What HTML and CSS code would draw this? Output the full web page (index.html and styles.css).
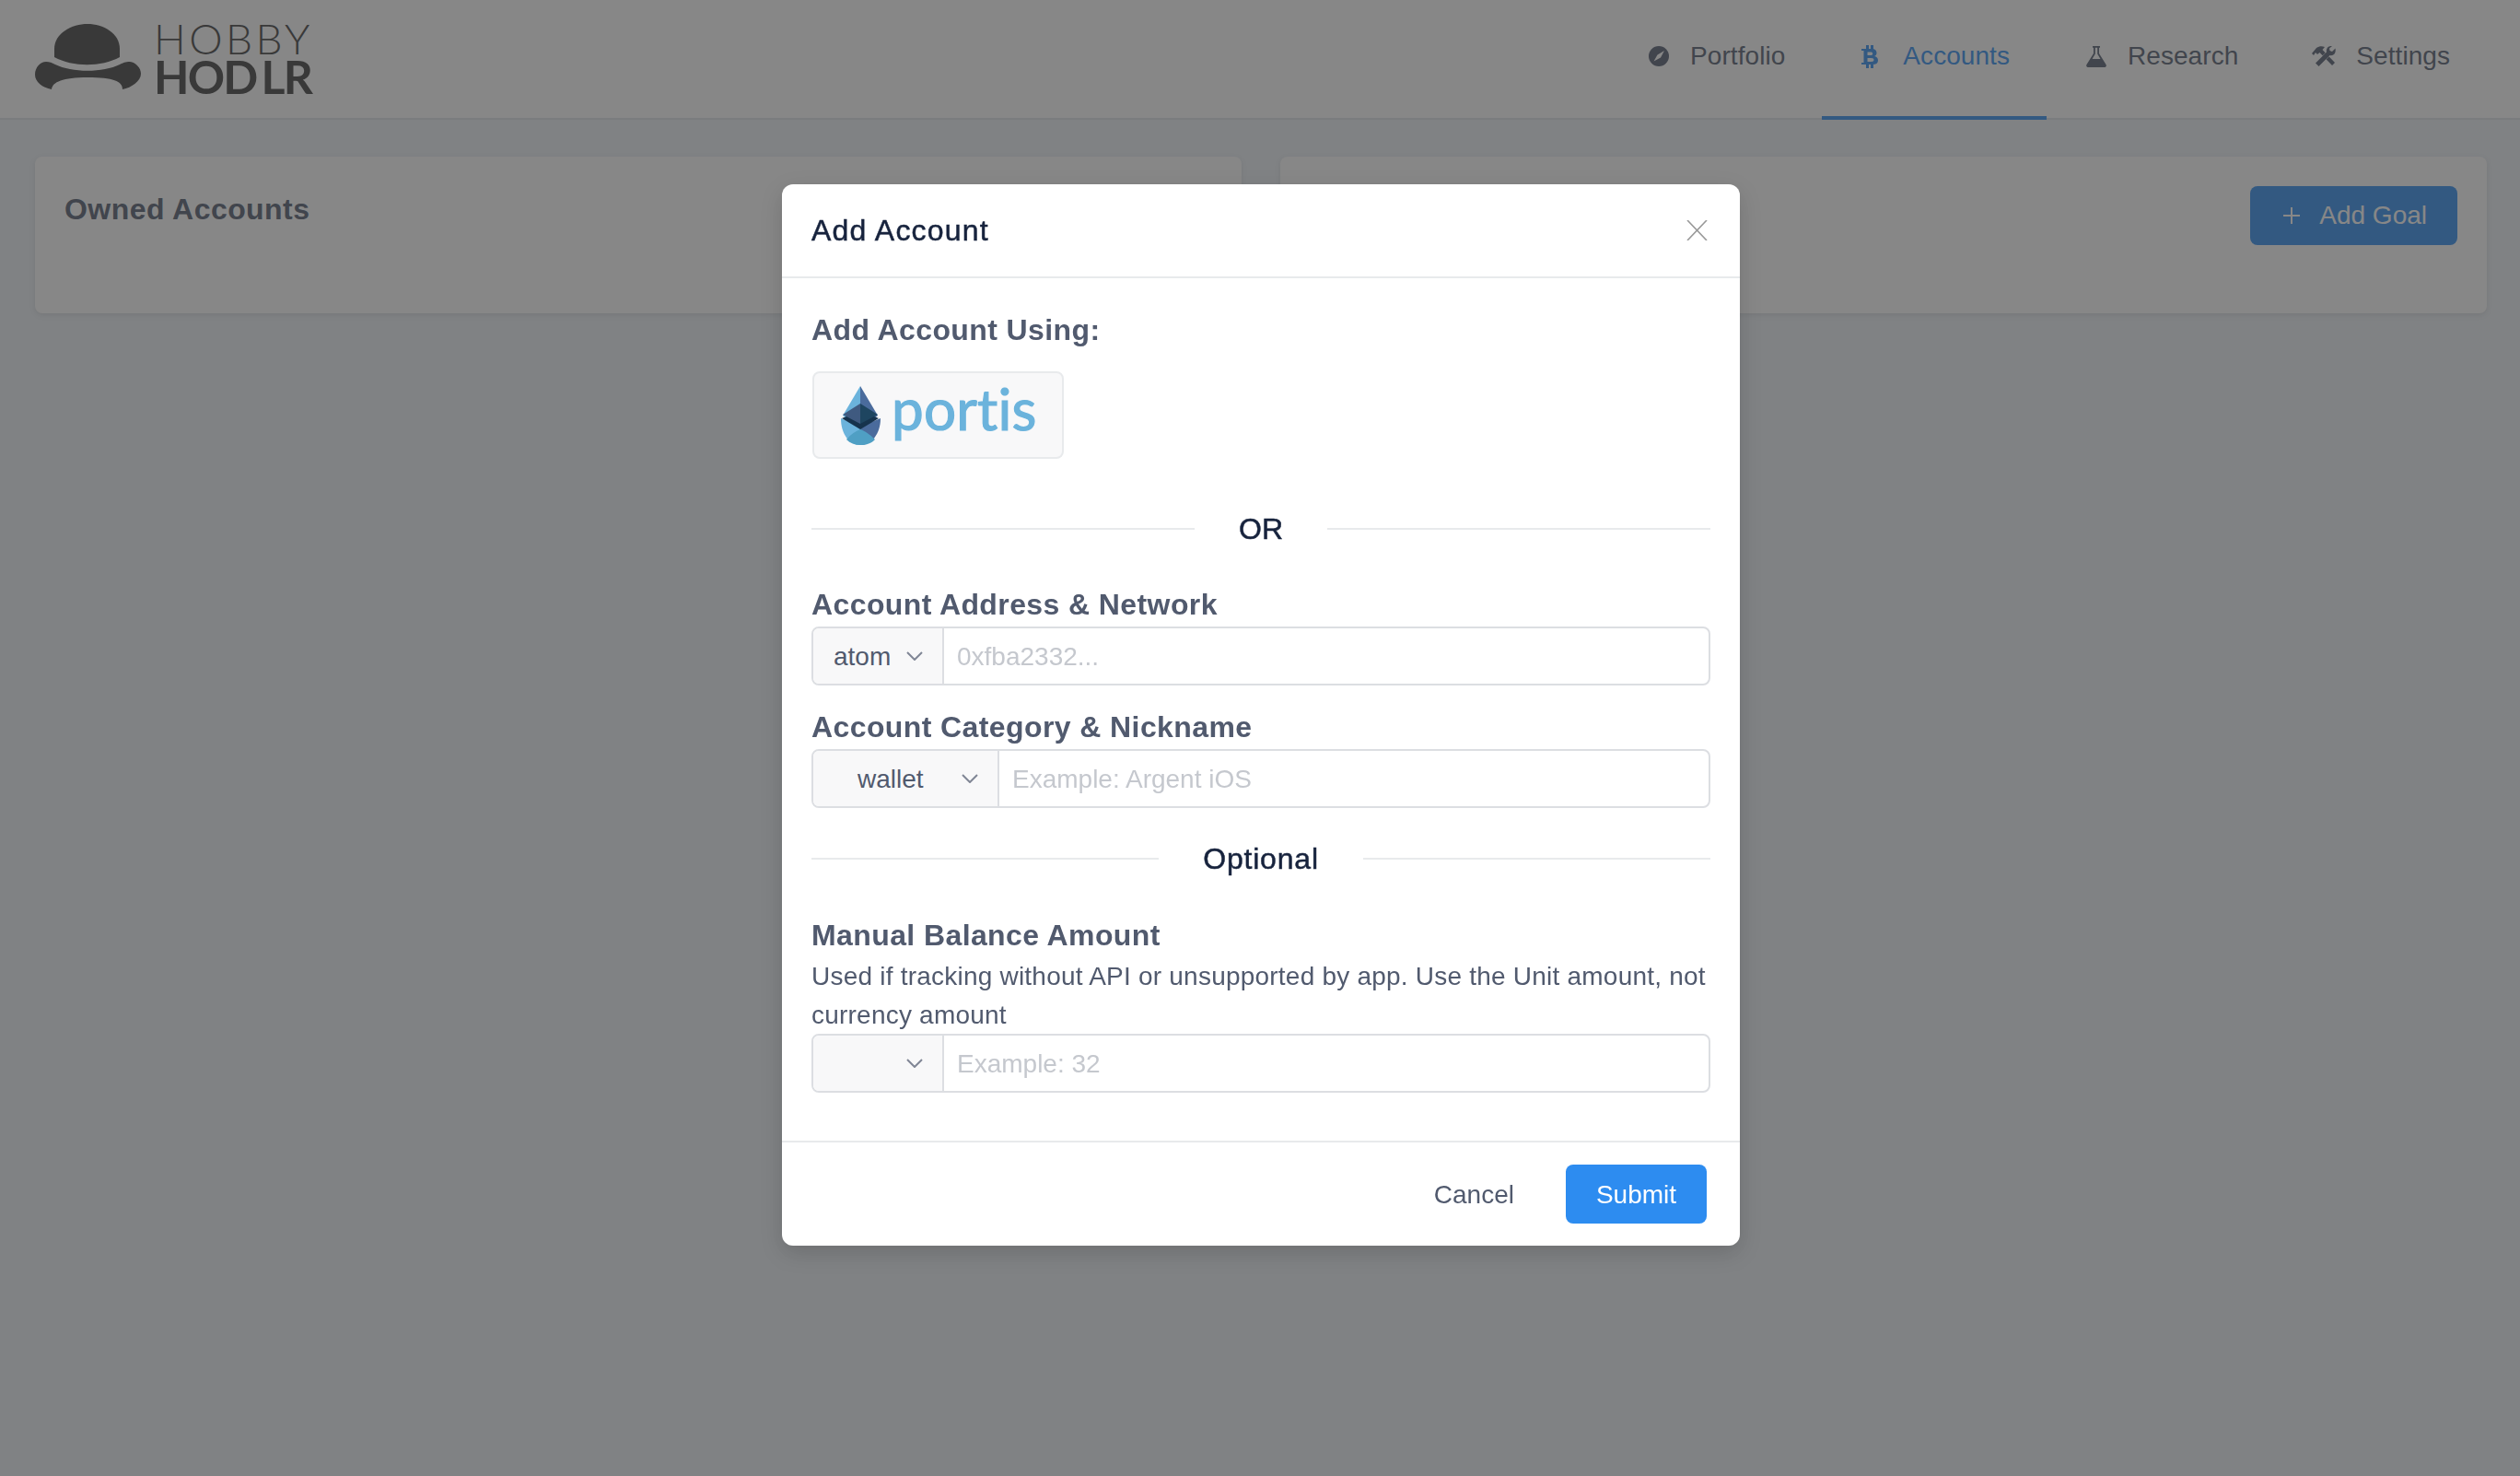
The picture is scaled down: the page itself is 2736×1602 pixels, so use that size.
FILE: index.html
```html
<!DOCTYPE html>
<html lang="en">
<head>
  <meta charset="UTF-8">
  <meta name="viewport" content="width=device-width, initial-scale=1.0">
  <title>Hobby Hodlr</title>
  <link rel="stylesheet" href="styles.css">
</head>
<body>
  <header class="topbar">
    <div class="logo">
      <svg class="logo-hat" width="115" height="71" viewBox="0 0 115 71">
        <path d="M21 36V27C21 10 40 0 57 0C74 0 92 10 92 27V36C72 47 41 47 21 36Z"/>
        <path d="M12 41C16 41 18 42 22 44C40 53 74 53 92 44C96 42 98 41 103 41C110 42 115 48 115 54C115 62 105 69 95 71C95 62 85 58 57 58C30 58 19 63 18 71C8 69 0 63 0 55C0 47 6 41 12 41Z"/>
      </svg>
      <div class="logo-text">
        <div class="logo-top">HOBBY</div>
        <div class="logo-bottom">HOD<span class="logo-gap">LR</span></div>
      </div>
    </div>
    <nav class="nav">
      <a class="nav-item">
        <span class="nav-icon">
          <svg width="22" height="22" viewBox="0 0 22 22"><circle cx="11" cy="11" r="11" fill="currentColor"/><path d="M17 5L13 12.5L5.5 16.5L9.5 9.5Z" fill="#fff"/></svg>
        </span>
        Portfolio
      </a>
      <a class="nav-item active">
        <span class="nav-icon">
          <svg width="18" height="25" viewBox="0 0 18 25" fill="currentColor">
            <rect x="5" y="0" width="3" height="4.5"/><rect x="10" y="0" width="3" height="4.5"/>
            <rect x="5" y="20.5" width="3" height="4.5"/><rect x="10" y="20.5" width="3" height="4.5"/>
            <path fill-rule="evenodd" d="M0 4H11C15 4 16.5 6 16.5 8.5C16.5 10.5 15.5 11.5 14 12C16.5 12.6 18 14 18 16.5C18 19.5 16 21 12 21H0V19H2.5V6H0ZM6.5 7.5V11H10C11.5 11 12.2 10.3 12.2 9.2C12.2 8.2 11.5 7.5 10 7.5ZM6.5 14V18H10.5C12.5 18 13.5 17.3 13.5 16C13.5 14.7 12.5 14 10.5 14Z"/>
          </svg>
        </span>
        Accounts
      </a>
      <a class="nav-item">
        <span class="nav-icon">
          <svg width="22" height="23" viewBox="0 0 22 23" fill="currentColor"><path fill-rule="evenodd" d="M7 0H15V1.8H14V8L21.5 20C22.5 21.8 21.3 23 19.5 23H2.5C.7 23 -.5 21.8 .5 20L8 8V1.8H7ZM9.8 1.8V8.5L6.5 14H15.5L12.2 8.5V1.8Z"/></svg>
        </span>
        Research
      </a>
      <a class="nav-item">
        <span class="nav-icon nav-icon-tools">
          <svg width="26" height="22" viewBox="0 0 26 22" fill="currentColor">
            <path d="M0 8L5 2C8 0 11 0 14 1L11.5 4L25 18L22 21L8.5 7L6 9L4 7L2 10Z"/>
            <path d="M25.5 2.5L22 6L19.5 5L19 2.5L22 0C18 -.5 15 2.5 16 6.5L4 18.5L7.5 22L19.5 10C23.5 11 26.5 8 25.5 2.5Z" stroke="#fff" stroke-width="1" paint-order="stroke"/>
          </svg>
        </span>
        Settings
      </a>
    </nav>
  </header>

  <main class="content">
    <section class="card">
      <h2 class="card-title">Owned Accounts</h2>
    </section>
    <section class="card card-right">
      <button class="goal-btn">
        <svg width="18" height="18" viewBox="0 0 18 18"><path d="M9 0V18M0 9H18" stroke="#fff" stroke-width="2"/></svg>
        Add Goal
      </button>
    </section>
  </main>

  <div class="mask"></div>

  <div class="modal-wrap">
    <div class="modal">
      <div class="modal-header">
        <span class="modal-title">Add Account</span>
        <svg width="23" height="22" viewBox="0 0 23 22"><path d="M1 0L22 22M22 0L1 22" stroke="#999" stroke-width="1.6" fill="none"/></svg>
      </div>

      <div class="modal-body">
        <div class="label">Add Account Using:</div>
        <button class="portis">
          <svg width="43" height="64" viewBox="0 0 43 64">
            <path d="M21 0L2 32L21 48Z" fill="#6bb3dc"/>
            <path d="M21 0L40 32L21 48Z" fill="#4a6b9c"/>
            <path d="M0 35C0 52 9 64 21 64V44Z" fill="#6bb3dc"/>
            <path d="M43 35C43 52 33 64 21 64V44Z" fill="#4a6b9c"/>
            <path d="M6 58C10 62 15 64 21 64C28 64 33 62 37 58C31 52 26 49 21 47C16 49 11 52 6 58Z" fill="#4f9fc4"/>
            <path d="M1 35L21 47L41 35L21 27Z" fill="#16334d"/>
            <path d="M2 31L21 19V41Z" fill="#3f5a80"/>
            <path d="M40 31L21 19V41Z" fill="#1e4560"/>
          </svg>
          <span class="portis-text">portis</span>
        </button>

        <div class="divider divider-or"><span class="divider-text">OR</span></div>

        <div class="label">Account Address &amp; Network</div>
        <div class="input-group">
          <div class="addon">
            <span class="addon-value">atom</span>
            <svg class="chev" width="18" height="10" viewBox="0 0 18 10"><path d="M1 1L9 9L17 1" stroke="#808695" stroke-width="2" fill="none"/></svg>
          </div>
          <input class="input" type="text" placeholder="0xfba2332...">
        </div>

        <div class="label label-next">Account Category &amp; Nickname</div>
        <div class="input-group">
          <div class="addon addon-wide">
            <span class="addon-value">wallet</span>
            <svg class="chev" width="18" height="10" viewBox="0 0 18 10"><path d="M1 1L9 9L17 1" stroke="#808695" stroke-width="2" fill="none"/></svg>
          </div>
          <input class="input" type="text" placeholder="Example: Argent iOS">
        </div>

        <div class="divider divider-opt"><span class="divider-text">Optional</span></div>

        <div class="label">Manual Balance Amount</div>
        <p class="help">Used if tracking without API or unsupported by app. Use the Unit amount, not currency amount</p>
        <div class="input-group">
          <div class="addon">
            <span class="addon-value"></span>
            <svg class="chev" width="18" height="10" viewBox="0 0 18 10"><path d="M1 1L9 9L17 1" stroke="#808695" stroke-width="2" fill="none"/></svg>
          </div>
          <input class="input" type="text" placeholder="Example: 32">
        </div>
      </div>

      <div class="modal-footer">
        <button class="btn-text">Cancel</button>
        <button class="btn-primary">Submit</button>
      </div>
    </div>
  </div>
</body>
</html>
```

FILE: styles.css
```css
* {
  box-sizing: border-box;
}
body {
  margin: 0;
  min-height: 100vh;
  background: #edf2f7;
  color: #515a6e;
  font-family: "Liberation Sans", Arial, sans-serif;
  font-size: 28px;
}

/* Top bar */
.topbar {
  display: flex;
  justify-content: space-between;
  height: 130px;
  padding: 0 36px 0 38px;
  background: #fff;
  border-bottom: 2px solid #dfe3e8;
}
.logo {
  display: flex;
  gap: 14px;
  padding-top: 26px;
  color: #3e3e3e;
}
.logo-hat {
  fill: #3e3e3e;
}
.logo-text {
  width: 172px;
  font-family: Lato, sans-serif;
}
.logo-top {
  height: 36px;
  font-size: 46px;
  font-weight: 300;
  line-height: 32px;
  letter-spacing: 3.4px;
}
.logo-bottom {
  height: 40px;
  margin-top: 3px;
  font-size: 50px;
  font-weight: 700;
  line-height: 36px;
  letter-spacing: -1.8px;
}
.logo-gap {
  margin-left: 5px;
}
.nav {
  display: flex;
  height: 130px;
}
.nav-item {
  display: flex;
  align-items: center;
  height: 130px;
  padding: 0 40px 4px;
  border-bottom: 4px solid transparent;
  letter-spacing: 0.06px;
}
.nav-item.active {
  color: #2d8cf0;
  border-bottom-color: #2d8cf0;
}
.nav-icon {
  display: flex;
  width: 48px;
  padding-left: 3px;
}
.nav-icon-tools {
  padding-left: 0;
}

/* Page cards */
.content {
  display: grid;
  grid-template-columns: 1fr 1fr;
  gap: 42px;
  padding: 40px 36px 0 38px;
}
.card {
  height: 170px;
  padding: 32px;
  background: #fff;
  border-radius: 8px;
  box-shadow: 0 2px 6px rgba(0, 0, 0, 0.1);
}
.card-right {
  display: flex;
  justify-content: flex-end;
}
.card-title {
  margin: 0;
  font-size: 32px;
  font-weight: bold;
  line-height: 51px;
  letter-spacing: 0.45px;
}
.goal-btn {
  display: flex;
  align-items: center;
  gap: 21px;
  height: 64px;
  padding: 0 33px 0 36px;
  background: #2d8cf0;
  border: none;
  border-radius: 8px;
  color: #fff;
  font: inherit;
}

/* Modal */
.mask {
  position: fixed;
  top: 0;
  left: 0;
  right: 0;
  bottom: 0;
  background: rgba(55, 55, 55, 0.6);
}
.modal-wrap {
  position: fixed;
  top: 0;
  left: 0;
  right: 0;
  bottom: 0;
  display: flex;
  justify-content: center;
  align-items: flex-start;
  padding: 200px 0 0 2px;
}
.modal {
  width: 1040px;
  background: #fff;
  border-radius: 12px;
  box-shadow: 0 8px 24px rgba(0, 0, 0, 0.15);
}
.modal-header {
  display: flex;
  justify-content: space-between;
  align-items: center;
  height: 102px;
  padding: 0 35px 0 32px;
  border-bottom: 2px solid #e8eaec;
}
.modal-title {
  color: #17233d;
  font-size: 32px;
  letter-spacing: 1.2px;
  -webkit-text-stroke: 0.5px #17233d;
}
.modal-body {
  padding: 32px 32px 52px;
}
.label {
  font-size: 32px;
  font-weight: bold;
  line-height: 48px;
  letter-spacing: 0.4px;
}
.label-next {
  margin-top: 21px;
}
.portis {
  display: flex;
  align-items: flex-start;
  gap: 12px;
  width: 273px;
  height: 95px;
  margin: 21px 0 0 1px;
  padding: 14px 0 0 29px;
  background: #f8f8f9;
  border: 2px solid #e8eaec;
  border-radius: 8px;
}
.portis-text {
  color: #6bb3dc;
  font-family: Lato, sans-serif;
  font-size: 62px;
  font-weight: 400;
  line-height: 48px;
  letter-spacing: 0.2px;
  -webkit-text-stroke: 1.2px #6bb3dc;
}
.divider {
  display: flex;
  align-items: center;
  height: 48px;
  color: #17233d;
  font-size: 32px;
}
.divider::before,
.divider::after {
  content: "";
  flex: 1;
  height: 2px;
  background: #e8eaec;
}
.divider-text {
  padding: 0 48px;
  -webkit-text-stroke: 0.5px #17233d;
}
.divider-or {
  margin: 52px 0 34px;
}
.divider-opt {
  margin: 31px 0 35px;
}
.divider-opt .divider-text {
  letter-spacing: 0.8px;
}
.input-group {
  display: flex;
  height: 64px;
  background: #fff;
  border: 2px solid #dcdee2;
  border-radius: 8px;
  overflow: hidden;
}
.addon {
  display: flex;
  flex-shrink: 0;
  align-items: center;
  justify-content: space-between;
  width: 142px;
  padding: 2px 21px 0 22px;
  background: #f8f8f9;
  border-right: 2px solid #dcdee2;
}
.addon-wide {
  width: 202px;
  padding-left: 48px;
}
.addon-value {
  color: #515a6e;
}
.chev {
  margin-top: -2px;
}
.input {
  flex: 1;
  min-width: 0;
  padding: 2px 14px 0;
  border: none;
  outline: none;
  background: transparent;
  color: #515a6e;
  font: inherit;
}
.input::placeholder {
  color: #c5c8ce;
  opacity: 1;
}
.help {
  margin: 0 0 -1px;
  line-height: 42px;
  letter-spacing: 0.22px;
}
.modal-footer {
  display: flex;
  justify-content: flex-end;
  align-items: center;
  gap: 26px;
  padding: 24px 36px;
  border-top: 2px solid #e8eaec;
}
.btn-text {
  height: 64px;
  padding: 2px 30px 0;
  background: transparent;
  border: none;
  color: #515a6e;
  font: inherit;
}
.btn-primary {
  width: 153px;
  height: 64px;
  padding: 2px 0 0;
  background: #2d8cf0;
  border: none;
  border-radius: 8px;
  color: #fff;
  font: inherit;
}
```
